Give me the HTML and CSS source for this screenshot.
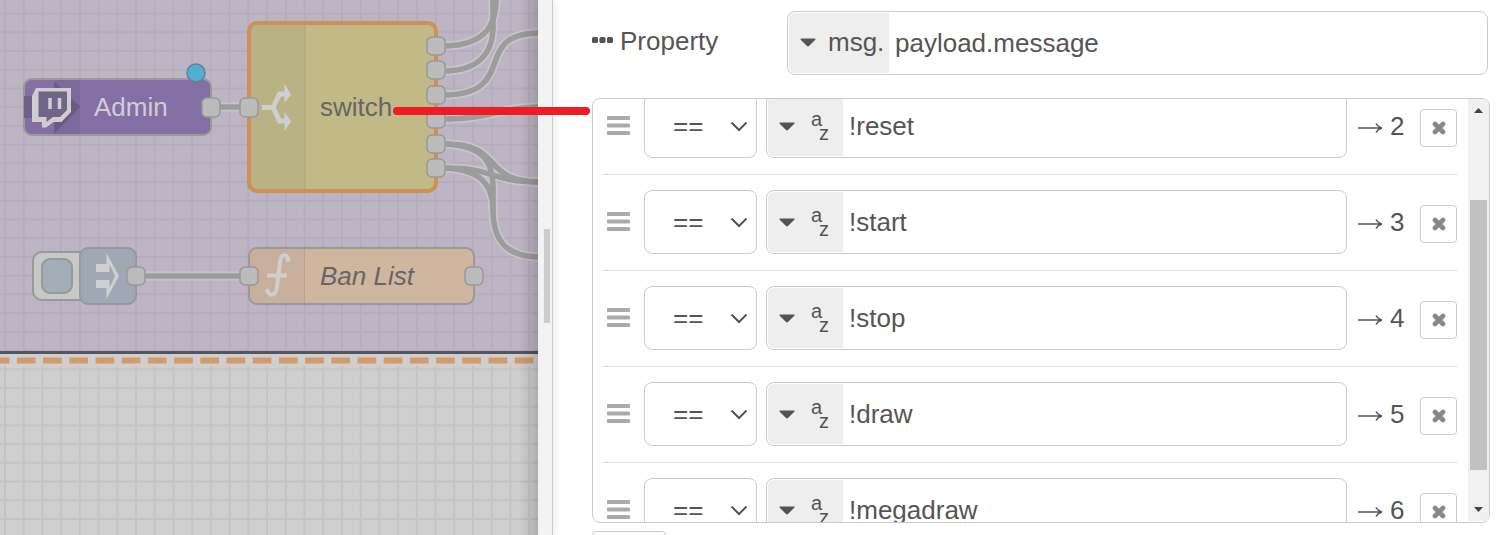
FILE: index.html
```html
<!DOCTYPE html>
<html lang="en">
<head>
<meta charset="utf-8">
<title>Flow editor</title>
<link rel="stylesheet" href="styles.css">
</head>
<body>
<svg class="defs" width="0" height="0" aria-hidden="true">
  <symbol id="bars" viewBox="0 0 23 20"><path d="M1.500 2h20M1.500 9.500h20M1.500 17h20" stroke="#aaa" stroke-width="4" stroke-linecap="round"/></symbol>
  <symbol id="caret" viewBox="0 0 16 9"><path d="M1 .5h14q1 .3.3 1.200L9 8q-1 .9-2 0L.7 1.700Q0 .8 1 .5z" fill="#555"/></symbol>
  <symbol id="chevron" viewBox="0 0 18 11"><path d="M1.500 1.500L9 9l7.500-7.500" fill="none" stroke="#555" stroke-width="2"/></symbol>
  <symbol id="cross" viewBox="0 0 14 14"><path d="M3 3l8 8M11 3l-8 8" stroke="#888" stroke-width="4.600" stroke-linecap="round"/></symbol>
  <symbol id="arrow" viewBox="0 0 25 12"><path d="M0 6H24M18 1.500Q20 5 24 6 20 7 18 10.500" fill="none" stroke="#555" stroke-width="1.500"/></symbol>
</svg>
<div class="editor">
  <main class="workspace">
    <svg class="flow" width="538" height="535">
      <defs>
        <pattern id="grid" x="4" y="50" width="18.720" height="18.720" patternUnits="userSpaceOnUse">
          <path d="M1 0V19M0 1H19" stroke="#c4c4c4" stroke-width="2"/>
        </pattern>
        <pattern id="group-grid" x="4" y="50" width="18.720" height="18.720" patternUnits="userSpaceOnUse">
          <path d="M1 0V19M0 1H19" stroke="#b5acbd" stroke-width="2"/>
        </pattern>
        <linearGradient id="edge"><stop offset="0" stop-color="#000" stop-opacity="0"/><stop offset="1" stop-color="#000" stop-opacity=".14"/></linearGradient>
        <g id="wires">
          <path d="M212 107H240"/>
          <path d="M145 276H240"/>
          <path d="M446 46C480 45 496 30 496 0"/>
          <path d="M446 71C480 70 492 52 493 30V0"/>
          <path d="M446 95C520 93 470 33 540 33"/>
          <path d="M446 119C490 119 500 107 540 107"/>
          <path d="M446 144C505 144 480 182 540 182"/>
          <path d="M446 144C482 146 493 160 493 188V210C493 246 512 257 540 257"/>
          <path d="M446 168C495 168 490 182 540 182"/>
          <path d="M446 168C482 170 493 186 493 210"/>
        </g>
      </defs>
      <rect width="538" height="535" fill="#cfcfcf"/>
      <rect y="366" width="538" height="169" fill="url(#grid)"/>
      <rect width="538" height="352" fill="#beb5c4"/>
      <rect width="538" height="352" fill="url(#group-grid)"/>
      <path d="M0 352.500H538" stroke="#555456" stroke-width="3"/>
      <path d="M-9.300 360.500H538" stroke="#d09c6b" stroke-width="6" stroke-dasharray="18.700 7.500"/>
      <use href="#wires" fill="none" stroke="#c8c5ca" stroke-width="9"/>
      <use href="#wires" fill="none" stroke="#9b9c9b" stroke-width="5.500"/>

      <g stroke="#999" stroke-width="2">
        <rect x="24" y="79" width="187" height="56" rx="8" fill="#836fa3"/>
        <rect x="33" y="252" width="60" height="48" rx="9" fill="#c8c8c8"/>
        <rect x="42" y="259" width="30" height="34" rx="8" fill="#a2adb8"/>
        <rect x="80" y="248" width="56" height="56" rx="8" fill="#9fa8b4"/>
        <rect x="249" y="248" width="225" height="56" rx="8" fill="#cfb69f"/>
      </g>
      <path d="M24 96H54V81L80 107 54 134V118H24z" fill="#6d6089"/>
      <path d="M55 80H80V134H55z" fill="#000" opacity=".04"/>
      <path d="M36 88H71V112L61.500 122H53.500L46 127.500H42V122H32V96z" fill="#cfcdd1"/>
      <path d="M38.500 91.500H67V110L60 117H53L46.500 122V117H38.500z" fill="#706586"/>
      <path d="M50 98V109M59.500 98V109" stroke="#cfcdd1" stroke-width="3.500"/>
      <text class="node-label light" x="94" y="116">Admin</text>
      <circle cx="196" cy="73" r="9" fill="#50aed2" stroke="#66808f" stroke-width="1.500"/>

      <rect x="249" y="23" width="187" height="168" rx="8" fill="#c1ba86"/>
      <path d="M257 23H305V191H257Q249 191 249 183V31Q249 23 257 23z" fill="#b8b284"/>
      <path d="M305 25V190" stroke="#aba679"/>
      <rect x="249" y="23" width="187" height="168" rx="8" fill="none" stroke="#d09055" stroke-width="4"/>
      <path d="M262 107.500H273L279.500 94H285M273 107L279.500 121H285" fill="none" stroke="#cfcfcf" stroke-width="5"/>
      <path d="M284.500 84L291 94.500 284.500 103zM284.500 112L291 121.500 284.500 131z" fill="#cfcfcf"/>
      <text class="node-label" x="320" y="116">switch</text>

      <path d="M96 264H106.500V253L119 276 106.500 299V288H96V280H109.500V288L115 276 109.500 264V272H96z" fill="#cfcfcf"/>
      <path d="M258 249H304V303H258Q250 303 250 295V257Q250 249 258 249z" fill="#c8af9c"/>
      <path d="M304.500 249V303" stroke="#baa290"/>
      <path d="M288.500 260C287 254 281 253 280 262L277 287C276 296 269 297 267 290M267 275.500H287" fill="none" stroke="#cfcfcf" stroke-width="4"/>
      <circle cx="288" cy="259.500" r="2.500" fill="#cfcfcf"/><circle cx="267.500" cy="291" r="2.500" fill="#cfcfcf"/>
      <text class="node-label italic" x="320" y="285">Ban List</text>

      <g fill="#bbb" stroke="#999" stroke-width="1.500">
        <rect x="202" y="98" width="18" height="19" rx="5"/>
        <rect x="240" y="98" width="18" height="19" rx="5"/>
        <rect x="127" y="267" width="18" height="18" rx="5"/>
        <rect x="240" y="267" width="18" height="18" rx="5"/>
        <rect x="465" y="267" width="18" height="18" rx="5"/>
        <rect x="427" y="37" width="18" height="18" rx="5"/>
        <rect x="427" y="61" width="18" height="18" rx="5"/>
        <rect x="427" y="86" width="18" height="18" rx="5"/>
        <rect x="427" y="110" width="18" height="18" rx="5"/>
        <rect x="427" y="135" width="18" height="18" rx="5"/>
        <rect x="427" y="159" width="18" height="18" rx="5"/>
      </g>
      <rect x="518" width="20" height="535" fill="url(#edge)"/>
    </svg>
  </main>
  <div class="splitter"><span class="grip"></span></div>
  <section class="tray">
    <div class="property">
      <label class="property-label" for="property">
        <svg width="22" height="8" viewBox="0 0 22 8"><g fill="#555"><rect y="0" width="6" height="6" rx="1.500"/><rect x="7.500" width="6" height="6" rx="1.500"/><rect x="15" width="6" height="6" rx="1.500"/></g></svg>
        Property
      </label>
      <div class="typed">
        <button class="type msg" type="button"><svg width="16" height="9"><use href="#caret"/></svg>msg.</button>
        <input class="value" id="property" type="text" value="payload.message">
      </div>
    </div>
    <div class="rules">
      <ol class="rule-list">
        <li class="rule">
          <svg class="handle" width="23" height="20"><use href="#bars"/></svg>
          <div class="operator"><select aria-label="Operator for output 2"><option>==</option></select><svg width="18" height="11"><use href="#chevron"/></svg></div>
          <div class="typed">
            <button class="type" type="button" aria-label="string"><svg width="16" height="9"><use href="#caret"/></svg><span class="az"><span>a</span><span>z</span></span></button>
            <input class="value" type="text" aria-label="Value for output 2" value="!reset">
          </div>
          <span class="output"><svg width="25" height="12"><use href="#arrow"/></svg>2</span>
          <button class="remove" type="button" aria-label="Remove"><svg width="14" height="14"><use href="#cross"/></svg></button>
        </li>
        <li class="rule">
          <svg class="handle" width="23" height="20"><use href="#bars"/></svg>
          <div class="operator"><select aria-label="Operator for output 3"><option>==</option></select><svg width="18" height="11"><use href="#chevron"/></svg></div>
          <div class="typed">
            <button class="type" type="button" aria-label="string"><svg width="16" height="9"><use href="#caret"/></svg><span class="az"><span>a</span><span>z</span></span></button>
            <input class="value" type="text" aria-label="Value for output 3" value="!start">
          </div>
          <span class="output"><svg width="25" height="12"><use href="#arrow"/></svg>3</span>
          <button class="remove" type="button" aria-label="Remove"><svg width="14" height="14"><use href="#cross"/></svg></button>
        </li>
        <li class="rule">
          <svg class="handle" width="23" height="20"><use href="#bars"/></svg>
          <div class="operator"><select aria-label="Operator for output 4"><option>==</option></select><svg width="18" height="11"><use href="#chevron"/></svg></div>
          <div class="typed">
            <button class="type" type="button" aria-label="string"><svg width="16" height="9"><use href="#caret"/></svg><span class="az"><span>a</span><span>z</span></span></button>
            <input class="value" type="text" aria-label="Value for output 4" value="!stop">
          </div>
          <span class="output"><svg width="25" height="12"><use href="#arrow"/></svg>4</span>
          <button class="remove" type="button" aria-label="Remove"><svg width="14" height="14"><use href="#cross"/></svg></button>
        </li>
        <li class="rule">
          <svg class="handle" width="23" height="20"><use href="#bars"/></svg>
          <div class="operator"><select aria-label="Operator for output 5"><option>==</option></select><svg width="18" height="11"><use href="#chevron"/></svg></div>
          <div class="typed">
            <button class="type" type="button" aria-label="string"><svg width="16" height="9"><use href="#caret"/></svg><span class="az"><span>a</span><span>z</span></span></button>
            <input class="value" type="text" aria-label="Value for output 5" value="!draw">
          </div>
          <span class="output"><svg width="25" height="12"><use href="#arrow"/></svg>5</span>
          <button class="remove" type="button" aria-label="Remove"><svg width="14" height="14"><use href="#cross"/></svg></button>
        </li>
        <li class="rule">
          <svg class="handle" width="23" height="20"><use href="#bars"/></svg>
          <div class="operator"><select aria-label="Operator for output 6"><option>==</option></select><svg width="18" height="11"><use href="#chevron"/></svg></div>
          <div class="typed">
            <button class="type" type="button" aria-label="string"><svg width="16" height="9"><use href="#caret"/></svg><span class="az"><span>a</span><span>z</span></span></button>
            <input class="value" type="text" aria-label="Value for output 6" value="!megadraw">
          </div>
          <span class="output"><svg width="25" height="12"><use href="#arrow"/></svg>6</span>
          <button class="remove" type="button" aria-label="Remove"><svg width="14" height="14"><use href="#cross"/></svg></button>
        </li>
      </ol>
      <div class="scrollbar">
        <svg width="9" height="5"><path d="M0 5L4.500 0 9 5z" fill="#444"/></svg>
        <div class="track"><div class="thumb"></div></div>
        <svg width="9" height="5"><path d="M0 0L4.500 5 9 0z" fill="#444"/></svg>
      </div>
    </div>
    <div class="footer"><button class="add" type="button" aria-label="Add rule"></button></div>
  </section>
  <div class="marker"></div>
</div>
</body>
</html>
```
FILE: styles.css
```css
* {
  box-sizing: border-box;
}

body {
  margin: 0;
  font-family: "Liberation Sans", Arial, sans-serif;
  font-size: 26px;
  color: #555;
  background: #fff;
}

button,
input,
select {
  margin: 0;
  font: inherit;
  color: inherit;
}

svg {
  display: block;
  flex: none;
}

.defs {
  position: absolute;
}

.editor {
  position: relative;
  display: flex;
  height: 100vh;
  overflow: hidden;
}

.workspace {
  flex: 0 0 538px;
  overflow: hidden;
  background: #cfcfcf;
}

.node-label {
  font-size: 26px;
  fill: #666;
}

.node-label.light {
  fill: #d0cdd4;
}

.node-label.italic {
  font-style: italic;
}

.splitter {
  flex: 0 0 15px;
  display: flex;
  align-items: center;
  justify-content: center;
  padding: 17px 0 0 3px;
  background: #f3f3f3;
  border-right: 1px solid #ccc;
  box-shadow: 2px 0 8px rgba(0, 0, 0, 0.08);
}

.grip {
  width: 6px;
  height: 94px;
  background: #ccc;
}

.tray {
  flex: 1;
  min-width: 0;
  min-height: 0;
  display: flex;
  flex-direction: column;
  padding: 11px 11px 0 39px;
}

.property {
  display: flex;
  align-items: center;
  margin: 0 2px 23px 0;
}

.property-label {
  flex: 0 0 195px;
  display: flex;
  align-items: center;
  gap: 6px;
  padding-bottom: 4px;
}

.typed {
  flex: 1;
  min-width: 0;
  display: flex;
  height: 64px;
  padding: 1px;
  background: #fff;
  border: 1px solid #ccc;
  border-radius: 8px;
}

.type {
  display: flex;
  align-items: center;
  gap: 16px;
  width: 75px;
  padding: 0 0 0 11px;
  background: #eee;
  border: 0;
  border-radius: 6px 0 0 6px;
}

.type.msg {
  gap: 12px;
  width: 100px;
  padding-bottom: 2px;
}

.value {
  flex: 1;
  min-width: 0;
  padding: 0 6px;
  background: transparent;
  border: 0;
  outline: 0;
}

.az {
  display: flex;
  flex-direction: column;
  width: 18px;
  font-size: 20px;
  line-height: 14px;
  text-align: left;
}

.az span + span {
  align-self: flex-end;
}

.rules {
  flex: 1;
  min-height: 0;
  display: flex;
  padding-bottom: 1px;
  overflow: hidden;
  border: 1px solid #ccc;
  border-radius: 8px;
}

.rule-list {
  flex: 1;
  min-width: 0;
  height: 100%;
  margin: -20px 0 0;
  padding: 0 11px 0 10px;
  list-style: none;
}

.rule {
  display: flex;
  align-items: center;
  padding: 15px 0 16px 4px;
  border-bottom: 1px solid #ddd;
}

.handle {
  margin-right: 14px;
}

.operator {
  display: grid;
  align-items: center;
  width: 113px;
  margin-right: 9px;
}

.operator > * {
  grid-area: 1 / 1;
}

.operator svg {
  justify-self: end;
  margin-right: 9px;
  pointer-events: none;
}

.operator select {
  width: 100%;
  height: 64px;
  padding: 0 28px;
  appearance: none;
  background: #fff;
  border: 1px solid #ccc;
  border-radius: 8px;
}

.output {
  display: flex;
  align-items: center;
  gap: 7px;
  width: 73px;
  padding-left: 11px;
}

.output svg {
  margin-top: 4px;
}

.remove {
  display: grid;
  place-items: center;
  width: 37px;
  height: 38px;
  margin-top: 4px;
  padding: 0;
  background: #fff;
  border: 1px solid #ccc;
  border-radius: 4px;
}

.scrollbar {
  flex: 0 0 21px;
  display: flex;
  flex-direction: column;
  align-items: center;
  padding: 9px 0 9px;
  background: #f0f0f0;
}

.track {
  flex: 1;
  width: 17px;
  padding: 87px 0 37px;
}

.thumb {
  height: 100%;
  background: #c1c1c1;
}

.footer {
  flex: 0 0 4px;
  min-height: 0;
  margin-top: 8px;
}

.add {
  display: block;
  width: 74px;
  height: 38px;
  background: #fff;
  border: 1px solid #ccc;
  border-radius: 4px;
}

.marker {
  position: absolute;
  top: 107px;
  left: 393px;
  width: 197px;
  height: 8px;
  background: #ee1c24;
  border-radius: 4px;
}
```
